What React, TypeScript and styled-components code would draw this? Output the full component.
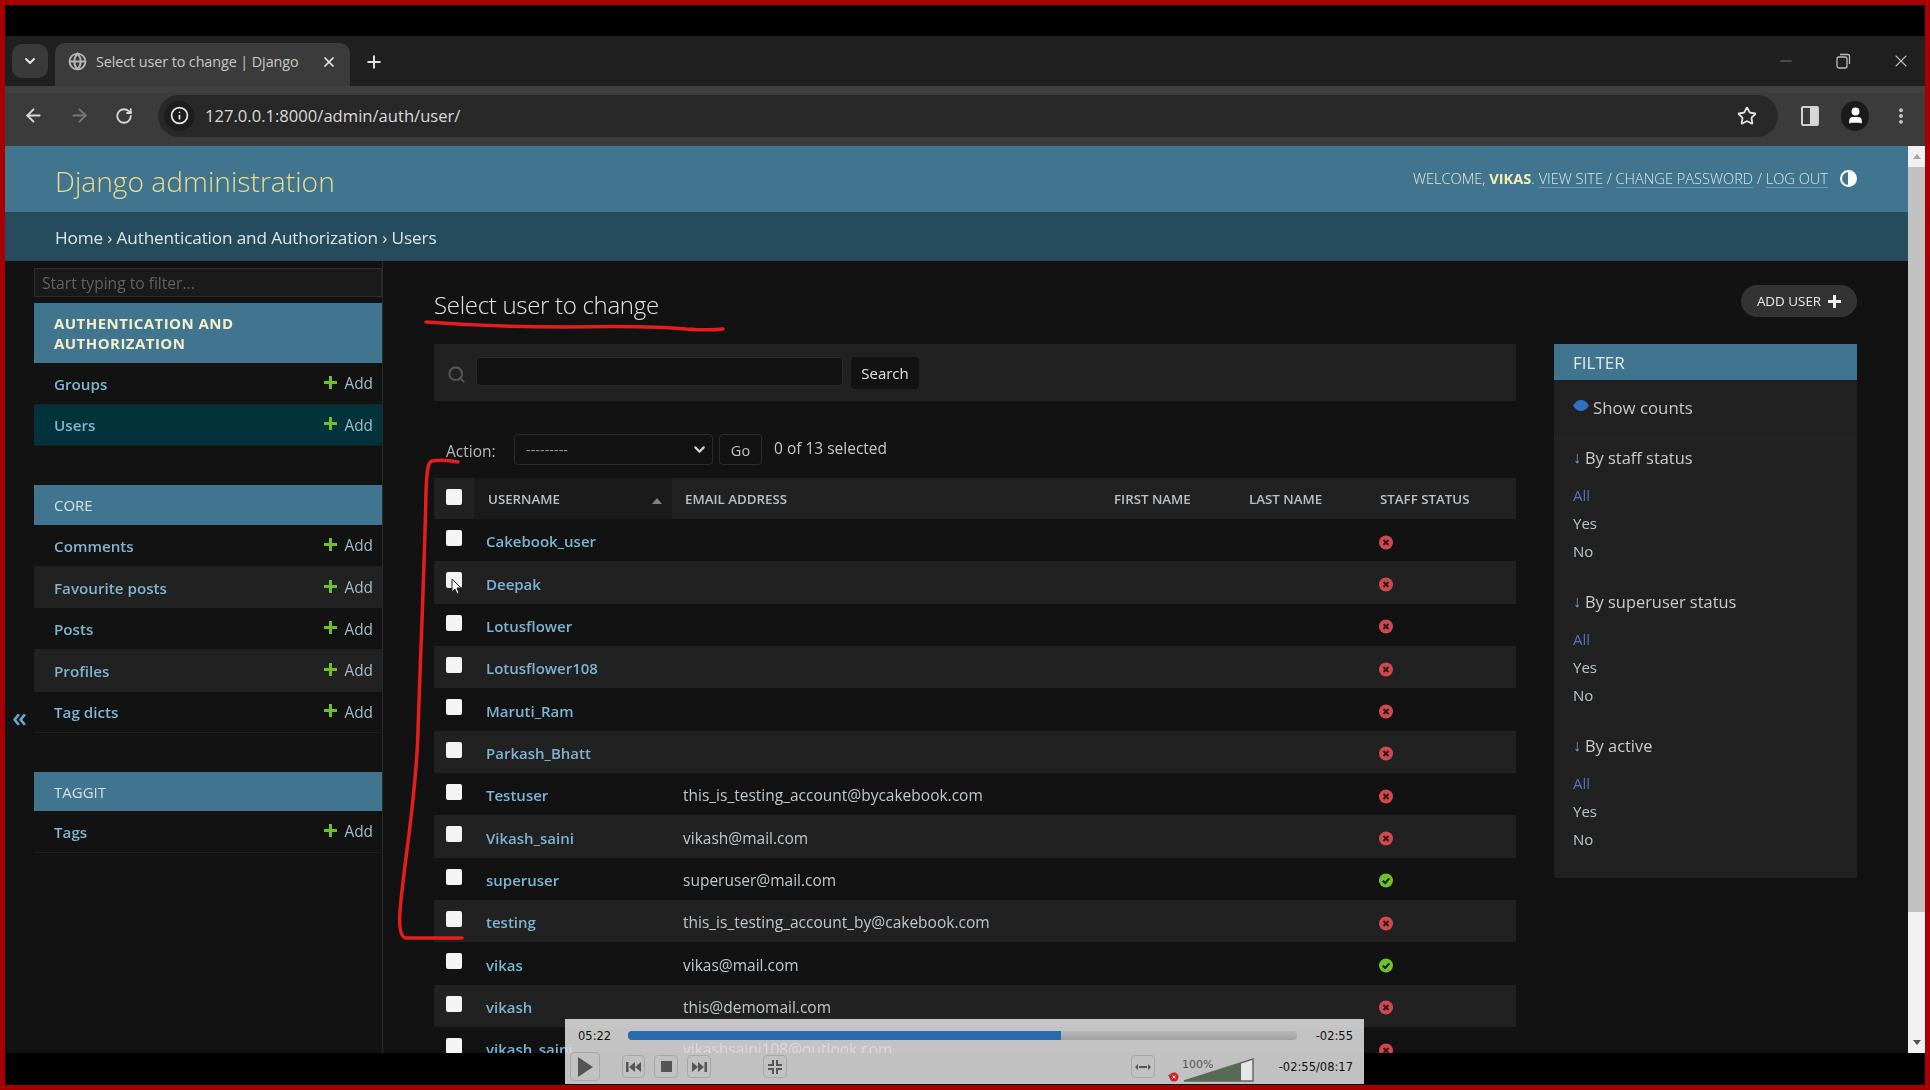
import React from "react";
import styled, { createGlobalStyle } from "styled-components";
import { ArrowLeft, ArrowRight, RotateCw, Info, Star, MoreVertical, X, Plus, ChevronDown, Globe, Minus, Search as SearchGlyph, User } from "lucide-react";

const Global = createGlobalStyle`
  html, body { margin: 0; padding: 0; background: #000; overflow: hidden; }
  * { box-sizing: border-box; }
  body { font-family: "Open Sans", "Liberation Sans", sans-serif; }
`;

const Frame = styled.div`
  position: relative;
  width: 1930px;
  height: 1090px;
  border: solid #a80000;
  border-width: 5px;
  background: #000;
  display: flex;
  flex-direction: column;
  overflow: hidden;
`;
const TopBlack = styled.div`height: 31px; flex: none; background: #000;`;
const TabStrip = styled.div`
  height: 50px; flex: none; background: #202020; display: flex; align-items: flex-end;
  padding-left: 7px; color: #dcdcdc; position: relative;
`;
const TabList = styled.div`
  width: 36px; height: 34px; margin-bottom: 8px; border-radius: 10px; background: #3a3a3a;
  display: flex; align-items: center; justify-content: center; color: #e4e4e4;
`;
const Tab = styled.div`
  width: 295px; height: 43px; margin-left: 7px; background: #3b3b3b; border-radius: 10px 10px 0 0;
  display: flex; align-items: center; padding: 0 13px 6px 13px; color: #d8d8d8;
`;
const TabTitle = styled.span`
  font-size: 14.4px; margin-left: 9px; width: 216px; white-space: nowrap; overflow: hidden; color: #c8c8c8; letter-spacing: -0.1px;
`;
const TabClose = styled.span`margin-left: 9px; display: flex; color: #e8e8e8;`;
const NewTab = styled.span`margin: 0 0 14px 14px; display: flex; color: #e0e0e0;`;
const WindowControls = styled.div`
  margin-left: auto; height: 50px; display: flex; align-items: center; gap: 40px; padding: 0 14px 0 0; color: #bbb;
`;
const Toolbar = styled.div`
  height: 60px; flex: none; background: #3b3b3b; display: flex; align-items: center; padding: 0 0 8px 18px; color: #d8d8d8;
  border-top: 7px solid #404040;
`;
const NavButtons = styled.div`display: flex; gap: 25px; align-items: center; width: 135px;`;
const Omnibox = styled.div`
  width: 1620px; height: 42px; border-radius: 21px; background: #282828; display: flex; align-items: center; padding: 0 21px 0 6px;
`;
const InfoWrap = styled.span`
  width: 30px; height: 30px; border-radius: 50%; background: #1d1d1d; display: flex; align-items: center; justify-content: center; color: #e8e8e8;
`;
const Url = styled.span`font-size: 16.6px; color: #dadada; margin-left: 11px;`;
const StarWrap = styled.span`margin-left: auto; display: flex; color: #e4e4e4;`;
const ToolIcons = styled.div`display: flex; align-items: center; margin-left: 23px; gap: 22px; color: #ddd;`;
const SidePanelIcon = styled.span`
  width: 18px; height: 20px; border: 2px solid #cfcfcf; border-radius: 2px; background: linear-gradient(90deg, #3b3b3b 50%, #d8d8d8 50%);
`;
const Avatar = styled.span`
  width: 28px; height: 30px; border-radius: 50%; background: #1a1a1a; color: #fff; display: flex; align-items: center; justify-content: center;
`;

const Screen = styled.div`
  height: 907px; flex: none; display: flex; filter: blur(0.35px);
`;
const Page = styled.div`
  width: 1903px; height: 907px; background: #121212; display: flex; flex-direction: column; overflow: hidden; flex: none;
`;
const Scrollbar = styled.div`
  width: 17px; flex: none; background: #f1f1f1; display: flex; flex-direction: column; align-items: center; position: relative;
`;
const ScrollArrow = styled.span<{ $down?: boolean }>`
  height: 21px; flex: none; width: 100%; display: flex; align-items: center; justify-content: center;
  margin-top: ${p => (p.$down ? "auto" : "0")};
  &::before {
    content: ""; border-left: 4px solid transparent; border-right: 4px solid transparent;
    ${p => (p.$down ? "border-top: 5px solid #505050;" : "border-bottom: 5px solid #a3a3a3;")}
  }
`;
const ScrollThumb = styled.span`width: 100%; height: 745px; flex: none; background: #c1c1c1;`;

const SiteHeader = styled.header`
  height: 66px; flex: none; background: #41758f; display: flex; align-items: center; justify-content: space-between; padding: 0 51px 0 50px;
`;
const Brand = styled.h1`
  font-weight: 300; font-size: 28.2px; color: #eadc8c; margin: 3px 0 0; letter-spacing: 0;
`;
const UserTools = styled.div`
  display: flex; align-items: center; font-size: 14.6px; font-weight: 300; color: #e8e8d0; text-transform: uppercase; margin-top: -2px; white-space: pre;
`;
const UserName = styled.strong`font-weight: 700; color: #f5eeb0;`;
const ToolLink = styled.span`color: #dbe6ea; border-bottom: 1px solid #6f9bb2; line-height: 18px;`;
const Contrast = styled.span`
  width: 17px; height: 17px; margin-left: 12px; border-radius: 50%; border: 2px solid #fff; background: linear-gradient(90deg, #41758f 50%, #fff 50%);
`;
const Crumbs = styled.nav`
  height: 49px; flex: none; background: #264b5d; color: #dbe7ec; font-size: 17.2px; display: flex; align-items: center; padding: 2px 0 0 50px; font-weight: 400; letter-spacing: -0.15px;
`;
const Body = styled.div`flex: 1; display: flex; min-height: 0;`;
const CollapseCol = styled.div`
  width: 29px; flex: none; display: flex; align-items: center; justify-content: center; color: #6aa6d6; font-size: 27px; padding-top: 118px; font-weight: 600;
`;
const Sidebar = styled.aside`
  width: 349px; flex: none; border-right: 1px solid #2a2a2a; padding: 7px 0 0 0;
`;
const NavFilter = styled.div`
  height: 29px; border: 1px solid #2d2d2d; background: #1a1a1a; color: #626262; font-size: 15.6px; display: flex; align-items: center; padding-left: 7px; margin-bottom: 6px;
`;
const Module = styled.section`margin-bottom: 39px;`;
const Caption = styled.div<{ $h: number; $strong?: boolean }>`
  height: ${p => p.$h}px; background: #41758f; display: flex; align-items: center; padding: 0 0 0 20px; line-height: 20px;
  font-size: 15px;
  font-weight: ${p => (p.$strong ? 700 : 400)};
  color: ${p => (p.$strong ? "#f4efc8" : "#d4e0e5")};
  letter-spacing: ${p => (p.$strong ? "0.45px" : "0")};
`;
const NavRow = styled.div<{ $alt?: boolean; $current?: boolean }>`
  height: 41.6px; display: flex; align-items: center; padding: 1px 9px 0 20px; border-bottom: 1px solid #1f1f1f;
  background: ${p => (p.$current ? "#03333a" : p.$alt ? "#212121" : "#121212")};
`;
const NavName = styled.span`font-size: 15.2px; font-weight: 600; color: #81b4d0;`;
const AddLink = styled.span`
  margin-left: auto; display: flex; align-items: center; gap: 7px; font-size: 15.4px; color: #a4bccb;
`;
const Main = styled.main`flex: 1; padding: 24px 51px 0 51px; min-width: 0;`;
const HeadRow = styled.div`height: 32px; display: flex; justify-content: space-between; margin-bottom: 27px;`;
const Title = styled.h2`
  font-size: 24px; line-height: 32px; font-weight: 300; color: #e4e4e4; margin: 4px 0 0; letter-spacing: -0.3px;
`;
const AddUser = styled.span`
  width: 116px; height: 32px; border-radius: 16px; background: #333; color: #e8e8e8; font-size: 13.4px; display: flex; align-items: center; justify-content: center; gap: 7px; font-weight: 400;
`;
const Columns = styled.div`display: flex; justify-content: space-between; align-items: flex-start;`;
const ListCol = styled.div`width: 1082px;`;
const SearchBar = styled.div`
  height: 57px; background: #212121; display: flex; align-items: flex-start; padding: 13px 0 0 13px; color: #555;
`;
const SearchIconWrap = styled.span`display: flex; margin-top: 8px;`;
const SearchInput = styled.div`width: 367px; height: 29px; margin-left: 10px; background: #121212; border-radius: 4px; border: 1px solid #2a2a2a;`;
const SearchButton = styled.span`
  width: 68px; height: 32px; margin-left: 8px; background: #121212; border-radius: 4px; color: #e2e2e2; font-size: 15px; display: flex; align-items: center; justify-content: center;
`;
const Actions = styled.div`
  height: 31px; margin: 33px 0 13px; display: flex; align-items: center; padding-left: 12px; font-size: 15.5px; color: #b8b8b8;
`;
const ActionLabel = styled.span`width: 68px; padding-top: 2px;`;
const ActionSelect = styled.div`
  width: 199px; height: 31px; border: 1px solid #2a2a2a; border-radius: 4px; background: #121212; display: flex; align-items: center; justify-content: space-between; padding: 0 4px 0 11px; color: #9a9a9a; font-size: 14.5px;
`;
const GoButton = styled.span`
  width: 43px; height: 31px; margin-left: 6px; border: 1px solid #2a2a2a; border-radius: 4px; display: flex; align-items: center; justify-content: center; color: #c4c4c4; padding-top: 2px; font-size: 14.5px;
`;
const Counter = styled.span`margin-left: 12px; color: #c8c8c8; padding-bottom: 3px;`;
const cols = "40px 198px 429px 135px 131px 149px";
const HeadGrid = styled.div`
  display: grid; grid-template-columns: ${cols}; height: 41px; background: #212121; align-items: stretch; font-size: 13.3px; font-weight: 600; color: #b9c0c6;
`;
const HeadCell = styled.div<{ $sorted?: boolean }>`
  display: flex; align-items: center; position: relative; padding-top: 1px;
  background: ${p => (p.$sorted ? "#1a1a1a" : "transparent")};
  padding-left: ${p => (p.$sorted ? "14px" : "13px")};
`;
const SortCaret = styled.span`
  position: absolute; right: 10px; top: 20px; border-left: 5px solid transparent; border-right: 5px solid transparent; border-bottom: 6px solid #808080;
`;
const CheckCell = styled.div`padding: 11px 0 0 12px;`;
const Box = styled.span`display: block; width: 16px; height: 16px; background: #f4f4f4; border-radius: 2px;`;
const DataRow = styled.div<{ $alt: boolean }>`
  display: grid; grid-template-columns: ${cols}; height: 42.35px; align-items: center; position: relative; font-size: 15.5px; padding-top: 2px;
  background: ${p => (p.$alt ? "#212121" : "#121212")};
`;
const DataCheck = styled.div`align-self: start; padding: 9px 0 0 12px;`;
const UserLink = styled.span`padding-left: 12px; font-weight: 600; color: #7db4d4; font-size: 15px;`;
const EmailCell = styled.span`padding-left: 11px; color: #c0c8cc;`;
const StatusCell = styled.span`grid-column: 5 / 7; padding: 2px 0 0 143px; display: flex;`;
const Pointer = styled.svg`position: absolute; left: 17px; top: 17px;`;
const FilterBox = styled.aside`width: 303px; height: 534px; background: #212121;`;
const FilterHead = styled.div`height: 36px; background: #41758f; color: #e4e9ec; display: flex; align-items: center; padding: 1px 0 0 19px; font-size: 17px;`;
const CountsRow = styled.div`
  height: 58px; display: flex; align-items: center; padding: 0 0 2px 19px; gap: 4px; color: #c8c8c8; font-size: 16.8px; border-bottom: 1px solid #262626;
`;
const Eye = styled.svg`margin-top: -4px;`;
const FilterGroup = styled.div`margin-bottom: 0;`;
const GroupTitle = styled.div`
  height: 38px; padding-left: 19px; display: flex; align-items: center; gap: 4px; color: #ccc; font-size: 16.4px;
`;
const Arrow = styled.span`color: #6fa6d6; font-size: 16px; font-weight: 700;`;
const Choices = styled.div`padding-top: 5px; height: 106px;`;
const Choice = styled.div<{ $on?: boolean }>`
  height: 28px; display: flex; align-items: center; padding-left: 19px; font-size: 15px;
  color: ${p => (p.$on ? "#5570c4" : "#bcc6cb")};
`;

const Player = styled.div`
  position: absolute; left: 560px; top: 1014px; width: 799px; height: 65px; background: rgba(220, 220, 220, 0.88);
  display: flex; flex-direction: column; color: #111; font-family: "DejaVu Sans", sans-serif; font-size: 11.5px;
`;
const SeekRow = styled.div`height: 33px; display: flex; align-items: center; padding: 0 11px 0 13px;`;
const SeekTime = styled.span`width: 50px;`;
const SeekTrack = styled.div`width: 669px; height: 9px; border-radius: 4px; background: linear-gradient(#b8b8b8, #a0a0a0); overflow: hidden; margin-top: -1px;`;
const SeekFill = styled.div`height: 100%; background: #2a6bad;`;
const Remain = styled.span`margin-left: auto;`;
const CtrlRow = styled.div`flex: 1; display: flex; align-items: center; padding: 0 11px 3px 5px; min-height: 0;`;
const CtrlBtn = styled.span<{ $w: number; $h: number; $ml: number }>`
  width: ${p => p.$w}px; height: ${p => p.$h}px; margin-left: ${p => p.$ml}px; flex: none;
  border: 1px solid #a8a8a8; border-radius: 4px; display: flex; align-items: center; justify-content: center;
`;
const VolumeWrap = styled.div`position: relative; width: 86px; height: 24px; margin-left: 13px; flex: none; top: 3px;`;
const VolumeLabel = styled.span`position: absolute; left: 14px; top: 0; font-size: 11px; color: #555;`;
const TimeTotal = styled.span`margin-left: auto;`;
const Annotation = styled.svg`position: absolute; left: -5px; top: -5px; pointer-events: none;`;

const AddPlus = () => (
  <svg width="13" height="13" viewBox="0 0 13 13" style={{ marginTop: -3 }}><path d="M5 0h3v5h5v3H8v5H5V8H0V5h5z" fill="#70bf2b" /></svg>
);
const NoIcon = () => (
  <svg width="14" height="15" viewBox="0 0 14 14"><circle cx="7" cy="7" r="7" fill="#cf4a4f" /><path d="M4.500 4.500l5 5M9.500 4.500l-5 5" stroke="#3a1515" strokeWidth="2" /></svg>
);
const YesIcon = () => (
  <svg width="14" height="15" viewBox="0 0 14 14"><circle cx="7" cy="7" r="7" fill="#70bf2b" /><path d="M3.800 7.200l2.300 2.300 4.200-4.600" stroke="#10200a" strokeWidth="2" fill="none" /></svg>
);

const navModules = [
  { cap: ["AUTHENTICATION AND", "AUTHORIZATION"], h: 60, strong: true, rows: [["Groups", false, false], ["Users", false, true]] },
  { cap: ["CORE"], h: 40, rows: [["Comments", false, false], ["Favourite posts", true, false], ["Posts", false, false], ["Profiles", true, false], ["Tag dicts", false, false]] },
  { cap: ["TAGGIT"], h: 39, rows: [["Tags", false, false]] },
] as { cap: string[]; h: number; strong?: boolean; rows: [string, boolean, boolean][] }[];

const users: [string, string, boolean][] = [
  ["Cakebook_user", "", false],
  ["Deepak", "", false],
  ["Lotusflower", "", false],
  ["Lotusflower108", "", false],
  ["Maruti_Ram", "", false],
  ["Parkash_Bhatt", "", false],
  ["Testuser", "this_is_testing_account@bycakebook.com", false],
  ["Vikash_saini", "vikash@mail.com", false],
  ["superuser", "superuser@mail.com", true],
  ["testing", "this_is_testing_account_by@cakebook.com", false],
  ["vikas", "vikas@mail.com", true],
  ["vikash", "this@demomail.com", false],
  ["vikash_saini", "vikashsaini108@outlook.com", false],
];
const filters = ["By staff status", "By superuser status", "By active"];

export default function App() {
  return (
    <Frame>
      <Global />
      <TopBlack />
      <TabStrip>
        <TabList><ChevronDown size={16} strokeWidth={3} /></TabList>
        <Tab>
          <Globe size={19} strokeWidth={2.4} color="#b5b5b5" />
          <TabTitle>Select user to change | Django</TabTitle>
          <TabClose><X size={16} strokeWidth={2.6} /></TabClose>
        </Tab>
        <NewTab><Plus size={20} strokeWidth={2.4} /></NewTab>
        <WindowControls>
          <Minus size={18} strokeWidth={1.4} color="#777" />
          <svg width="16" height="16" viewBox="0 0 16 16" fill="none" stroke="#bbb" strokeWidth="1.3"><rect x="2" y="4" width="10" height="11" rx="2" /><path d="M5 1.500h7.500a2 2 0 0 1 2 2V11" /></svg>
          <X size={20} strokeWidth={1.3} />
        </WindowControls>
      </TabStrip>
      <Toolbar>
        <NavButtons>
          <ArrowLeft size={21} strokeWidth={2.2} />
          <ArrowRight size={21} strokeWidth={2.2} color="#777" />
          <RotateCw size={18} strokeWidth={2.4} />
        </NavButtons>
        <Omnibox>
          <InfoWrap><Info size={19} strokeWidth={2.2} /></InfoWrap>
          <Url>127.0.0.1:8000/admin/auth/user/</Url>
          <StarWrap><Star size={20} strokeWidth={2.2} /></StarWrap>
        </Omnibox>
        <ToolIcons>
          <SidePanelIcon />
          <Avatar><User size={19} fill="#fff" strokeWidth={2} /></Avatar>
          <MoreVertical size={20} strokeWidth={2.6} color="#ccc" />
        </ToolIcons>
      </Toolbar>
      <Screen>
        <Page>
          <SiteHeader>
            <Brand>Django administration</Brand>
            <UserTools>
              <span>Welcome, </span><UserName>Vikas</UserName><span>. </span>
              <ToolLink>View site</ToolLink><span> / </span>
              <ToolLink>Change password</ToolLink><span> / </span>
              <ToolLink>Log out</ToolLink>
              <Contrast />
            </UserTools>
          </SiteHeader>
          <Crumbs>Home › Authentication and Authorization › Users</Crumbs>
          <Body>
            <CollapseCol>«</CollapseCol>
            <Sidebar>
              <NavFilter>Start typing to filter...</NavFilter>
              {navModules.map(m => (
                <Module key={m.cap[0]}>
                  <Caption $h={m.h} $strong={m.strong}>
                    <span>{m.cap.map(c => <React.Fragment key={c}>{c}<br /></React.Fragment>)}</span>
                  </Caption>
                  {m.rows.map(([name, alt, cur]) => (
                    <NavRow key={name} $alt={alt} $current={cur}>
                      <NavName>{name}</NavName>
                      <AddLink><AddPlus />Add</AddLink>
                    </NavRow>
                  ))}
                </Module>
              ))}
            </Sidebar>
            <Main>
              <HeadRow>
                <Title>Select user to change</Title>
                <AddUser>ADD USER
                  <svg width="13" height="13" viewBox="0 0 13 13"><path d="M5 0h3v5h5v3H8v5H5V8H0V5h5z" fill="#f0f0f0" /></svg>
                </AddUser>
              </HeadRow>
              <Columns>
                <ListCol>
                  <SearchBar>
                    <SearchIconWrap><SearchGlyph size={19} strokeWidth={2.6} /></SearchIconWrap>
                    <SearchInput />
                    <SearchButton>Search</SearchButton>
                  </SearchBar>
                  <Actions>
                    <ActionLabel>Action:</ActionLabel>
                    <ActionSelect>---------<ChevronDown size={17} strokeWidth={3} color="#d0d0d0" /></ActionSelect>
                    <GoButton>Go</GoButton>
                    <Counter>0 of 13 selected</Counter>
                  </Actions>
                  <HeadGrid>
                    <CheckCell><Box /></CheckCell>
                    <HeadCell $sorted>USERNAME<SortCaret /></HeadCell>
                    <HeadCell>EMAIL ADDRESS</HeadCell>
                    <HeadCell>FIRST NAME</HeadCell>
                    <HeadCell>LAST NAME</HeadCell>
                    <HeadCell>STAFF STATUS</HeadCell>
                  </HeadGrid>
                  {users.map(([name, mail, staff], i) => (
                    <DataRow key={name} $alt={i % 2 === 1}>
                      <DataCheck><Box /></DataCheck>
                      <UserLink>{name}</UserLink>
                      <EmailCell>{mail}</EmailCell>
                      <StatusCell>{staff ? <YesIcon /> : <NoIcon />}</StatusCell>
                      {i === 1 && (
                        <Pointer width="11" height="18" viewBox="0 0 11 18"><path d="M1 1v13l3-3 2 5 2-1-2-5h4z" fill="#fff" stroke="#222" strokeWidth="1" /></Pointer>
                      )}
                    </DataRow>
                  ))}
                </ListCol>
                <FilterBox>
                  <FilterHead>FILTER</FilterHead>
                  <CountsRow>
                    <Eye width="16" height="11" viewBox="0 0 16 11"><path d="M0 5.500C3 1 5.500 0 8 0s5 1 8 5.500C13 10 10.500 11 8 11S3 10 0 5.500z" fill="#2f6fc4" /></Eye>
                    Show counts
                  </CountsRow>
                  {filters.map(f => (
                    <FilterGroup key={f}>
                      <GroupTitle><Arrow>↓</Arrow>{f}</GroupTitle>
                      <Choices>
                        <Choice $on>All</Choice>
                        <Choice>Yes</Choice>
                        <Choice>No</Choice>
                      </Choices>
                    </FilterGroup>
                  ))}
                </FilterBox>
              </Columns>
            </Main>
          </Body>
        </Page>
        <Scrollbar>
          <ScrollArrow />
          <ScrollThumb />
          <ScrollArrow $down />
        </Scrollbar>
      </Screen>
      <Player>
        <SeekRow>
          <SeekTime>05:22</SeekTime>
          <SeekTrack><SeekFill style={{ width: `${(433 / 669) * 100}%` }} /></SeekTrack>
          <Remain>-02:55</Remain>
        </SeekRow>
        <CtrlRow>
          <CtrlBtn $w={30} $h={29} $ml={0}>
            <svg width="16" height="20" viewBox="0 0 16 20"><path d="M1 0l15 10L1 20z" fill="#555" /></svg>
          </CtrlBtn>
          <CtrlBtn $w={23} $h={23} $ml={22}>
            <svg width="15" height="10" viewBox="0 0 15 10"><path d="M0 0h2.500v10H0zM3 5l6-5v10zM9 5l6-5v10z" fill="#555" /></svg>
          </CtrlBtn>
          <CtrlBtn $w={24} $h={23} $ml={9}>
            <svg width="11" height="11"><rect width="11" height="11" fill="#555" /></svg>
          </CtrlBtn>
          <CtrlBtn $w={24} $h={23} $ml={9}>
            <svg width="15" height="10" viewBox="0 0 15 10"><path d="M0 0l6 5-6 5zM6 0l6 5-6 5zM12.500 0H15v10h-2.500z" fill="#555" /></svg>
          </CtrlBtn>
          <CtrlBtn $w={24} $h={23} $ml={52}>
            <svg width="14" height="14" viewBox="0 0 14 14" fill="#555"><path d="M4 0h2v6H0V4h4zM8 0h2v4h4v2H8zM0 8h6v6H4v-4H0zM8 8h6v2h-4v4H8z" /></svg>
          </CtrlBtn>
          <CtrlBtn $w={24} $h={23} $ml={344}>
            <svg width="16" height="6" viewBox="0 0 16 6" fill="#555"><path d="M0 3l3-3v6zM16 3l-3-3v6zM4 2h8v2H4z" /></svg>
          </CtrlBtn>
          <VolumeWrap>
            <VolumeLabel>100%</VolumeLabel>
            <svg width="86" height="24" viewBox="0 0 86 24">
              <path d="M0 17l4-1h3v7H4z" fill="#555" />
              <circle cx="6" cy="19" r="4.500" fill="#d92020" />
              <path d="M4.500 17.500l3 3M7.500 17.500l-3 3" stroke="#fff" strokeWidth="1" />
              <path d="M16 23L85 1v22z" fill="#e6e6e6" stroke="#666" strokeWidth="1.500" />
              <path d="M16 23L73 5v18z" fill="#556b52" />
            </svg>
          </VolumeWrap>
          <TimeTotal>-02:55/08:17</TimeTotal>
        </CtrlRow>
      </Player>
      <Annotation width="1930" height="1090" viewBox="0 0 1930 1090" fill="none" stroke="#e81c1c" strokeWidth="3.500" strokeLinecap="round" strokeLinejoin="round">
        <path d="M426 322c40 3 90 5 140 5 50-1 90-1 120 2 15 1 30 1 37 0" />
        <path d="M458 462c-10-2-20-2-26-1-4 1-5 8-6 30-1 60-5 150-8 240-2 70-14 130-18 180-1 15 0 26 6 27h56" />
      </Annotation>
    </Frame>
  );
}
